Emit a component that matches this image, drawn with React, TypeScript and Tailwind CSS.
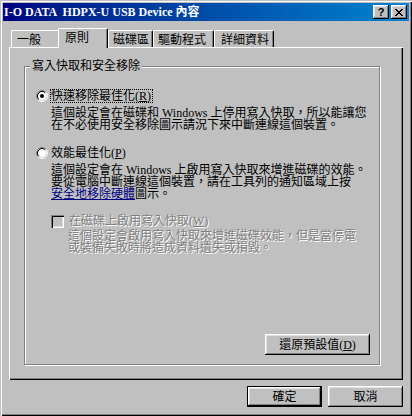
const raised =
  "bg-[#c0c0c0] shadow-[inset_-1px_-1px_#000,inset_1px_1px_#fff,inset_-2px_-2px_#808080,inset_2px_2px_#dfdfdf]";

function Radio({ checked }: { checked?: boolean }) {
  return (
    <svg width="12" height="12" viewBox="0 0 12 12" className="shrink-0">
      <circle cx="6" cy="6" r="4" fill="#fff" />
      <path d="M2.11 9.89A5.5 5.5 0 0 1 9.89 2.11" stroke="#808080" fill="none" />
      <path d="M9.89 2.11A5.5 5.5 0 0 1 2.11 9.89" stroke="#fff" fill="none" />
      <path d="M2.82 9.18A4.5 4.5 0 0 1 9.18 2.82" stroke="#000" fill="none" />
      <path d="M9.18 2.82A4.5 4.5 0 0 1 2.82 9.18" stroke="#dfdfdf" fill="none" />
      {checked && <circle cx="6" cy="6" r="2" fill="#000" />}
    </svg>
  );
}

function Tab({ label, width, pl, active }: { label: string; width: string; pl: string; active?: boolean }) {
  if (active) {
    return (
      <div
        className={`${width} ${pl} relative z-10 -mb-[1px] h-[20px] rounded-t-[2px] border-t border-l border-r border-white border-r-black bg-[#c0c0c0] pt-[3px] shadow-[inset_-1px_0_#808080]`}
      >
        {label}
      </div>
    );
  }
  return (
    <div
      className={`${width} ${pl} h-[17px] rounded-t-[2px] border-t border-l border-r border-white border-r-black pt-[3px] shadow-[inset_-1px_0_#808080]`}
    >
      {label}
    </div>
  );
}

export default function App() {
  return (
    <div className="flex h-[416px] w-[412px] flex-col bg-[#c0c0c0] p-[3px] font-['Liberation_Serif','Noto_Sans_CJK_TC',serif] text-[12px] leading-[12px] text-black shadow-[inset_1px_1px_#c0c0c0,inset_2px_2px_#fff,inset_-1px_-1px_#000,inset_-2px_-2px_#808080]">
      {/* 標題列 */}
      <div className="flex h-[18px] items-center justify-between bg-linear-to-r from-[#000080] to-[#1084d0] pl-[1px] pr-[2px]">
        <span className="whitespace-pre text-[12px] font-bold text-white">I-O DATA  HDPX-U USB Device 內容</span>
        <div className="flex gap-[2px]">
          <div className={`${raised} flex h-[14px] w-[16px] items-center justify-center font-['Liberation_Sans',sans-serif] text-[11px] font-bold leading-none`}>
            ?
          </div>
          <div className={`${raised} flex h-[14px] w-[16px] items-center justify-center`}>
            <svg width="8" height="7" viewBox="0 0 8 7" shapeRendering="crispEdges">
              <path
                d="M0 0h2v1H0zM6 0h2v1H6zM1 1h2v1H1zM5 1h2v1H5zM2 2h4v1H2zM3 3h2v1H3zM2 4h4v1H2zM1 5h2v1H1zM5 5h2v1H5zM0 6h2v1H0zM6 6h2v1H6z"
                fill="#000"
              />
            </svg>
          </div>
        </div>
      </div>

      {/* 索引標籤 */}
      <div className="ml-[8px] mt-[7px] flex h-[19px] items-end">
        <div className="h-[17px] w-[47px] rounded-tl-[2px] border-t border-l border-white pl-[5px] pt-[3px]">一般</div>
        <Tab label="原則" width="w-[50px]" pl="pl-[6px]" active />
        <Tab label="磁碟區" width="w-[45px]" pl="pl-[4px]" />
        <Tab label="驅動程式" width="w-[61px]" pl="pl-[4px]" />
        <Tab label="詳細資料" width="w-[60px]" pl="pl-[6px]" />
      </div>

      {/* 索引標籤頁 */}
      <div className="ml-[6px] flex h-[333px] w-[394px] flex-col shadow-[inset_1px_1px_#fff,inset_-1px_-1px_#000,inset_-2px_-2px_#808080]">
        <div className="relative ml-[15px] mt-[19px] flex h-[299px] w-[356px] flex-col border border-[#808080] pt-[22px] shadow-[1px_1px_0_#fff,inset_1px_1px_0_#fff]">
          <span className="absolute -top-[7px] left-[5px] bg-[#c0c0c0] px-[2px]">寫入快取和安全移除</span>

          <div className="flex h-[14px] items-center pl-[11px]">
            <Radio checked />
            <span className="ml-[2px] border border-dotted border-black pr-[1px]">
              快速移除最佳化(<span className="underline">R</span>)
            </span>
          </div>
          <div className="mt-[4px] whitespace-nowrap pl-[26px]">
            <div>這個設定會在磁碟和 Windows 上停用寫入快取，所以能讓您</div>
            <div>在不必使用安全移除圖示請況下來中斷連線這個裝置。</div>
          </div>

          <div className="mt-[15px] flex h-[14px] items-center pl-[11px]">
            <Radio />
            <span className="ml-[2px] border border-transparent pr-[1px]">
              效能最佳化(<span className="underline">P</span>)
            </span>
          </div>
          <div className="mt-[4px] whitespace-nowrap pl-[26px]">
            <div>這個設定會在 Windows 上啟用寫入快取來增進磁碟的效能。</div>
            <div>要從電腦中斷連線這個裝置，請在工具列的通知區域上按</div>
            <div>
              <span className="text-[#000080] underline">安全地移除硬體</span>圖示。
            </div>
          </div>

          <div className="mt-[14px] flex h-[14px] items-center pl-[26px] text-[#808080] [text-shadow:1px_1px_0_#fff]">
            <div className="h-[13px] w-[13px] shrink-0 bg-[#c0c0c0] shadow-[inset_1px_1px_#808080,inset_2px_2px_#000,inset_-1px_-1px_#fff,inset_-2px_-2px_#dfdfdf]" />
            <span className="ml-[4px] border border-transparent">
              在磁碟上啟用寫入快取(<span className="underline">W</span>)
            </span>
          </div>
          <div className="mt-[2px] whitespace-nowrap pl-[43px] text-[#808080] [text-shadow:1px_1px_0_#fff]">
            <div>這個設定會啟用寫入快取來增進磁碟效能，但是當停電</div>
            <div>或裝備失敗時將造成資料遺失或損毀。</div>
          </div>

          <div className={`${raised} mb-[9px] mr-[9px] mt-auto flex h-[21px] w-[105px] items-center justify-center self-end`}>
            還原預設值(<span className="underline">D</span>)
          </div>
        </div>
      </div>

      {/* 確定 / 取消 */}
      <div className="mt-[6px] flex justify-end gap-[6px] pr-[6px]">
        <div className="h-[21px] w-[75px] border border-black">
          <div className={`${raised} flex h-full w-full items-center justify-center`}>確定</div>
        </div>
        <div className={`${raised} flex h-[21px] w-[75px] items-center justify-center`}>取消</div>
      </div>
    </div>
  );
}
